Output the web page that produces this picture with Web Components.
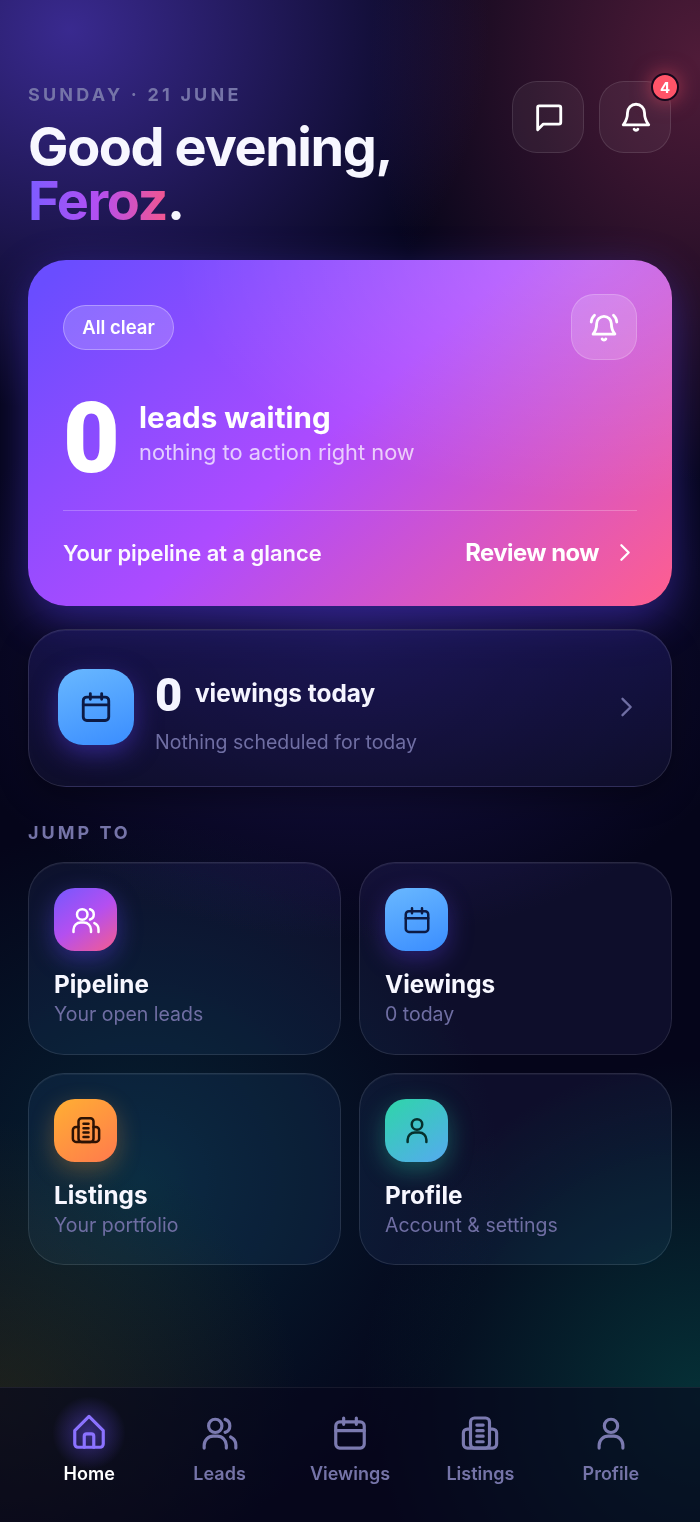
<!DOCTYPE html>
<html lang="en">
<head>
<meta charset="utf-8">
<title>Home</title>
<style>
  html, body { margin: 0; height: 100%; }
  body {
    background:
      radial-gradient(420px 380px at 70px 30px, rgba(72,52,176,.78), rgba(72,52,176,0) 100%),
      radial-gradient(330px 420px at 700px 60px, rgba(108,36,68,.72), rgba(108,36,68,0) 100%),
      radial-gradient(420px 300px at 350px 640px, rgba(52,36,140,.42), rgba(52,36,140,0) 100%),
      radial-gradient(300px 280px at 0px 1400px, rgba(70,66,20,.36), rgba(70,66,20,0) 100%),
      radial-gradient(360px 360px at 140px 1180px, rgba(8,72,84,.42), rgba(8,72,84,0) 100%),
      radial-gradient(340px 340px at 700px 1400px, rgba(6,84,78,.55), rgba(6,84,78,0) 100%),
      #05051a;
    color: #f5f5ff;
    font-family: Inter, "Liberation Sans", sans-serif;
  }
  app-page { display: flex; flex-direction: column; height: 1522px; }
</style>
</head>
<body>
<app-page>
  <top-greeting day="SUNDAY · 21 JUNE" name="Feroz"></top-greeting>
  <hero-card></hero-card>
  <viewing-card></viewing-card>
  <jump-grid>
    <jump-tile icon="users" tone="pink" heading="Pipeline" sub="Your open leads"></jump-tile>
    <jump-tile icon="calendar" tone="blue" heading="Viewings" sub="0 today"></jump-tile>
    <jump-tile icon="building" tone="orange" heading="Listings" sub="Your portfolio"></jump-tile>
    <jump-tile icon="user" tone="teal" heading="Profile" sub="Account &amp; settings"></jump-tile>
  </jump-grid>
  <bottom-nav>
    <nav-item icon="home" label="Home" active></nav-item>
    <nav-item icon="users" label="Leads"></nav-item>
    <nav-item icon="calendar" label="Viewings"></nav-item>
    <nav-item icon="building" label="Listings"></nav-item>
    <nav-item icon="user" label="Profile"></nav-item>
  </bottom-nav>
</app-page>

<script>
// 24x24 stroke icons shared by all the elements
const ICONS = {
  chat: '<path d="M5 4.200h14a1.300 1.300 0 0 1 1.300 1.300v10.200a1.300 1.300 0 0 1-1.300 1.300H8l-4 4V5.200a1 1 0 0 1 1-1z"/>',
  bell: '<path d="M12 3a6 6 0 0 0-6 6c0 5-1.600 6.600-3 8.500h18c-1.400-1.900-3-3.500-3-8.500a6 6 0 0 0-6-6z"/><path d="M10.700 20.700a1.500 1.500 0 0 0 2.600 0"/>',
  ring: '<path d="M12 4.500a5.200 5.200 0 0 0-5.200 5.200c0 4.300-1.300 5.800-2.500 7.300h15.400c-1.200-1.500-2.500-3-2.500-7.300A5.200 5.200 0 0 0 12 4.500z"/><path d="M10.700 20.500a1.500 1.500 0 0 0 2.600 0"/><path d="M3 8.500c.1-2 .9-3.500 2.300-4.800M21 8.500c-.1-2-.9-3.500-2.300-4.800"/>',
  calendar: '<rect x="3" y="5" width="18" height="16.500" rx="2.500"/><path d="M3 10.500h18M8 2.500v4M16 2.500v4"/>',
  users: '<circle cx="9" cy="7.500" r="4.200"/><path d="M2 21.500v-1.800a5.700 5.700 0 0 1 5.700-5.700h2.600a5.700 5.700 0 0 1 5.700 5.700v1.800"/><path d="M15.200 3.400a4.300 4.300 0 0 1 0 8.200M18.700 14.500a5.600 5.600 0 0 1 3.300 5.100v1.900"/>',
  building: '<rect x="6" y="2.500" width="12" height="19" rx="2.500"/><path d="M6 9.500H4a2.500 2.500 0 0 0-2.500 2.500v7A2.500 2.500 0 0 0 4 21.500h16a2.500 2.500 0 0 0 2.500-2.500v-7A2.500 2.500 0 0 0 20 9.500h-2"/><path d="M10 7h4M10 10.500h4M10 14h4M10 17.500h4"/>',
  user: '<circle cx="12" cy="7.500" r="4.200"/><path d="M4.500 21.500v-1.800a5.700 5.700 0 0 1 5.700-5.700h3.600a5.700 5.700 0 0 1 5.700 5.700v1.800"/>',
  home: '<path d="M3 10.500 12 1.500l9 9V19a2 2 0 0 1-2 2H5a2 2 0 0 1-2-2z"/><path d="M9 21v-7a1.500 1.500 0 0 1 1.500-1.500h3A1.500 1.500 0 0 1 15 14v7"/>',
  chevron: '<path d="m9 5 7 7-7 7"/>'
};

function icon(name, size, width) {
  return `<svg width="${size}" height="${size}" viewBox="0 0 24 24" fill="none" stroke="currentColor" stroke-width="${width}" stroke-linecap="round" stroke-linejoin="round">${ICONS[name]}</svg>`;
}

class TopGreeting extends HTMLElement {
  connectedCallback() {
    this.attachShadow({ mode: 'open' }).innerHTML = `
      <style>
        :host { display: flex; justify-content: space-between; padding: 81px 29px 0 28px; height: 179px; }
        .day { margin-top: 1px; font-size: 18px; font-weight: 700; letter-spacing: 3.200px; color: #7574a8; line-height: 26px; }
        h1 { margin: 12px 0 0; font-size: 54px; line-height: 54px; font-weight: 700; letter-spacing: -1.400px; color: #f7f7ff; }
        .name { display: inline-block; background: linear-gradient(90deg, #7c5cff, #b34ff2 50%, #f2568f); -webkit-background-clip: text; background-clip: text; color: transparent; }
        .actions { display: flex; gap: 15px; }
        .btn { position: relative; width: 72px; height: 72px; box-sizing: border-box; border-radius: 25px; border: 1.5px solid rgba(255,255,255,.11); background: rgba(255,255,255,.05); display: flex; align-items: center; justify-content: center; color: #fff; }
        .btn svg { margin-left: 1px; }
        .badge { position: absolute; top: -9px; right: -9px; width: 28px; height: 28px; box-sizing: border-box; border-radius: 50%; border: 2px solid #14081c; background: #ff5468; font-size: 15px; font-weight: 700; display: flex; align-items: center; justify-content: center; box-shadow: 0 0 20px rgba(255,84,104,.55); }
      </style>
      <div>
        <div class="day">${this.getAttribute('day')}</div>
        <h1>Good evening,<br><span class="name">${this.getAttribute('name')}</span>.</h1>
      </div>
      <div class="actions">
        <div class="btn">${icon('chat', 34, 2)}</div>
        <div class="btn">${icon('bell', 34, 2)}<span class="badge">4</span></div>
      </div>`;
  }
}

class HeroCard extends HTMLElement {
  connectedCallback() {
    this.attachShadow({ mode: 'open' }).innerHTML = `
      <style>
        :host { display: block; margin: 0 28px; height: 346px; box-sizing: border-box; padding: 34px 35px 0; border-radius: 38px; color: #fff;
          background:
            radial-gradient(420px 240px at 88% 0, rgba(255,255,255,.2), rgba(255,255,255,0)),
            linear-gradient(138deg, #6a4dff 4%, #ad4bff 48%, #ff5f8e 100%);
          box-shadow: 0 14px 44px rgba(96,70,255,.42); }
        .top { display: flex; justify-content: space-between; align-items: flex-start; }
        .pill { margin-top: 11px; height: 45px; width: 111px; box-sizing: border-box; padding-bottom: 1px; border-radius: 23px; border: 1.5px solid rgba(255,255,255,.3); background: rgba(255,255,255,.18); font-size: 18.500px; font-weight: 600; display: flex; align-items: center; justify-content: center; }
        .tile { width: 66px; height: 66px; box-sizing: border-box; border-radius: 23px; border: 1.5px solid rgba(255,255,255,.2); background: rgba(255,255,255,.16); display: flex; align-items: center; justify-content: center; }
        .count { display: flex; align-items: center; margin-top: 24px; height: 104px; }
        .zero { width: 76px; padding-top: 5px; font-family: Roboto, "Liberation Sans", sans-serif; font-size: 98px; line-height: 104px; font-weight: 900; }
        .words { margin-top: -6px; }
        .big { font-size: 29.600px; line-height: 36px; font-weight: 700; }
        .small { margin-top: 3px; font-size: 21.800px; line-height: 29px; color: rgba(255,255,255,.72); }
        .foot { margin-top: 21.500px; border-top: 1.5px solid rgba(255,255,255,.24); padding-top: 27.500px; display: flex; justify-content: space-between; align-items: center; }
        .glance { font-size: 21.900px; font-weight: 600; color: rgba(255,255,255,.96); }
        .review { display: flex; align-items: center; gap: 13px; font-size: 23.800px; font-weight: 700; letter-spacing: -.5px; }
      </style>
      <div class="top">
        <div class="pill">All clear</div>
        <div class="tile">${icon('ring', 34, 2)}</div>
      </div>
      <div class="count">
        <div class="zero">0</div>
        <div class="words"><div class="big">leads waiting</div><div class="small">nothing to action right now</div></div>
      </div>
      <div class="foot">
        <div class="glance">Your pipeline at a glance</div>
        <div class="review">Review now ${icon('chevron', 25, 2.200)}</div>
      </div>`;
  }
}

class ViewingCard extends HTMLElement {
  connectedCallback() {
    this.attachShadow({ mode: 'open' }).innerHTML = `
      <style>
        :host { display: flex; align-items: center; margin: 23px 28px 0; height: 158px; box-sizing: border-box; padding: 0 31px 0 29px; border-radius: 38px; border: 1.5px solid rgba(255,255,255,.12);
          background: linear-gradient(180deg, rgba(30,26,96,.55), rgba(20,20,52,.55)); box-shadow: 0 10px 30px rgba(0,0,0,.35), inset 0 1px 0 rgba(255,255,255,.06); }
        .ico { width: 76px; height: 76px; border-radius: 25px; margin-bottom: 2px; background: linear-gradient(160deg, #69b8ff, #3a8dff); color: #0c1a44; display: flex; align-items: center; justify-content: center; box-shadow: 0 8px 26px rgba(84,60,220,.5); flex: none; }
        .text { flex: 1; margin-left: 21px; padding-top: 7px; }
        .line { display: flex; align-items: center; gap: 13px; height: 50px; }
        .zero { width: 27px; padding-top: 2px; font-family: Roboto, "Liberation Sans", sans-serif; font-size: 47px; font-weight: 900; line-height: 50px; }
        .label { margin-top: -2px; font-size: 24.400px; font-weight: 700; }
        .sub { margin-top: 10px; font-size: 19.500px; line-height: 26px; color: #6f6ea3; }
        .go { color: #6f6ea3; display: flex; margin-bottom: 2px; }
      </style>
      <div class="ico">${icon('calendar', 34, 2)}</div>
      <div class="text">
        <div class="line"><span class="zero">0</span><span class="label">viewings today</span></div>
        <div class="sub">Nothing scheduled for today</div>
      </div>
      <div class="go">${icon('chevron', 28, 2)}</div>`;
  }
}

class JumpGrid extends HTMLElement {
  connectedCallback() {
    this.attachShadow({ mode: 'open' }).innerHTML = `
      <style>
        :host { display: block; margin: 0 28px; }
        h2 { margin: 34px 0 17px; font-size: 18px; line-height: 24px; font-weight: 700; letter-spacing: 3px; color: #7574a8; }
        .grid { display: grid; grid-template-columns: 1fr 1fr; gap: 18px; }
      </style>
      <h2>JUMP TO</h2>
      <div class="grid"><slot></slot></div>`;
  }
}

const TONES = {
  pink: ['linear-gradient(145deg, #7558ff, #b44ff0 50%, #f55c8f)', '#fff', 'rgba(100,70,255,.4)'],
  blue: ['linear-gradient(160deg, #69b8ff, #3a8dff)', '#0c1a44', 'rgba(84,60,220,.4)'],
  orange: ['linear-gradient(145deg, #ffaf33, #ff7a4d)', '#2c1204', 'rgba(255,160,50,.3)'],
  teal: ['linear-gradient(145deg, #2ed6a8, #55aaf0)', '#06302c', 'rgba(40,210,170,.35)']
};

class JumpTile extends HTMLElement {
  connectedCallback() {
    const tone = TONES[this.getAttribute('tone')];
    this.attachShadow({ mode: 'open' }).innerHTML = `
      <style>
        :host { display: block; height: 192.500px; box-sizing: border-box; padding: 25px; border-radius: 36px; border: 1.5px solid rgba(255,255,255,.11); background: rgba(255,255,255,.045); -webkit-backdrop-filter: saturate(140%); backdrop-filter: saturate(140%); box-shadow: inset 0 1px 0 rgba(255,255,255,.05); }
        .ico { width: 63px; height: 63px; border-radius: 21px; background: ${tone[0]}; color: ${tone[1]}; box-shadow: 0 8px 24px ${tone[2]}; display: flex; align-items: center; justify-content: center; }
        .name { margin-top: 17px; font-size: 24.300px; line-height: 32px; font-weight: 700; color: #f7f7ff; }
        .sub { margin-top: 1px; font-size: 19.500px; line-height: 26px; color: #6f6ea3; }
      </style>
      <div class="ico">${icon(this.getAttribute('icon'), 30, 2)}</div>
      <div class="name">${this.getAttribute('heading')}</div>
      <div class="sub">${this.getAttribute('sub')}</div>`;
  }
}

class BottomNav extends HTMLElement {
  connectedCallback() {
    this.attachShadow({ mode: 'open' }).innerHTML = `
      <style>
        :host { display: grid; grid-template-columns: repeat(5, 1fr); margin-top: auto; height: 135px; box-sizing: border-box; padding: 26px 24px 0; border-top: 1.5px solid rgba(255,255,255,.07); background: rgba(6,6,28,.6); }
      </style>
      <slot></slot>`;
  }
}

class NavItem extends HTMLElement {
  connectedCallback() {
    const active = this.hasAttribute('active');
    this.attachShadow({ mode: 'open' }).innerHTML = `
      <style>
        :host { display: flex; flex-direction: column; align-items: center; }
        .ico { position: relative; display: flex; color: ${active ? '#8b72ff' : '#7b7ab0'}; }
        .glow { position: absolute; inset: -18px; border-radius: 50%; background: radial-gradient(circle, rgba(112,84,255,.42), rgba(112,84,255,0) 70%); }
        svg { position: relative; }
        .label { margin-top: 10px; font-size: 18px; line-height: 24px; font-weight: 600; color: ${active ? '#fff' : '#7574a8'}; }
      </style>
      <div class="ico">${active ? '<div class="glow"></div>' : ''}${icon(this.getAttribute('icon'), 38, 2)}</div>
      <div class="label">${this.getAttribute('label')}</div>`;
  }
}

customElements.define('top-greeting', TopGreeting);
customElements.define('hero-card', HeroCard);
customElements.define('viewing-card', ViewingCard);
customElements.define('jump-grid', JumpGrid);
customElements.define('jump-tile', JumpTile);
customElements.define('bottom-nav', BottomNav);
customElements.define('nav-item', NavItem);
</script>
</body>
</html>
